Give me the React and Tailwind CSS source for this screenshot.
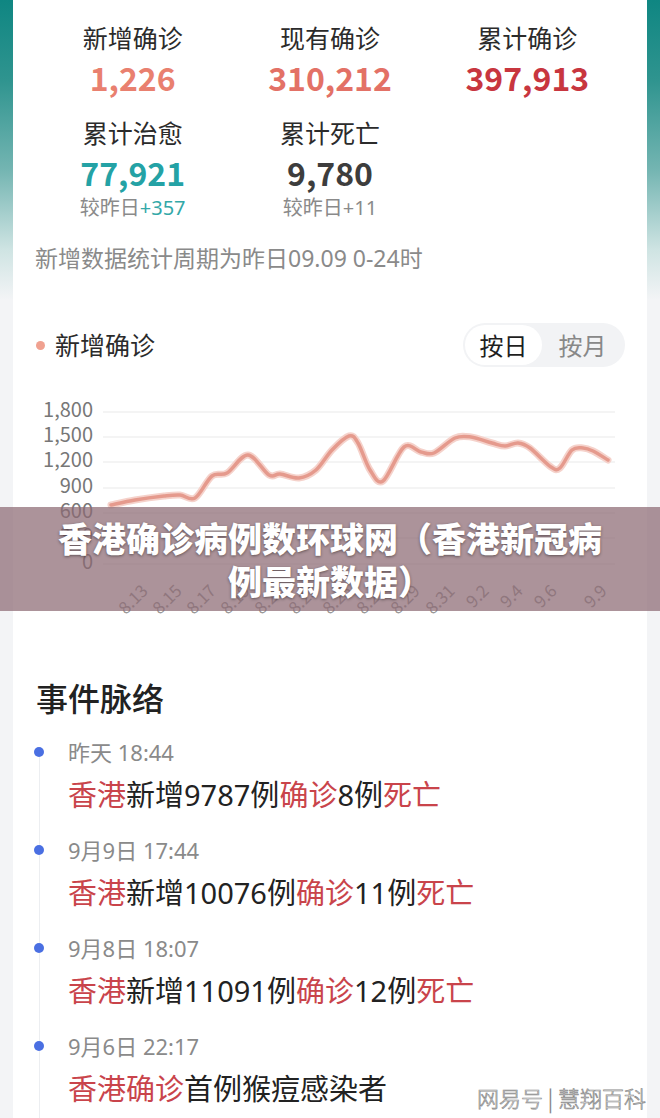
const points = [
  [111, 505], [135, 500], [164, 496], [180, 495], [195, 498], [212, 476], [227, 473],
  [248, 455], [269, 475], [280, 474], [299, 478], [316, 470], [332, 450], [349, 436],
  [358, 443], [370, 470], [383, 481], [404, 447], [421, 452], [434, 453], [455, 438],
  [471, 437], [492, 443], [505, 446], [518, 443], [530, 448], [551, 467], [560, 468],
  [572, 450], [583, 448], [593, 451], [608, 460],
];

// catmull-rom -> bezier
function smoothPath(pts) {
  let d = `M${pts[0][0]},${pts[0][1]}`;
  for (let i = 0; i < pts.length - 1; i++) {
    const p0 = pts[i - 1] || pts[i];
    const p1 = pts[i];
    const p2 = pts[i + 1];
    const p3 = pts[i + 2] || p2;
    const c1x = p1[0] + (p2[0] - p0[0]) / 6;
    const c1y = p1[1] + (p2[1] - p0[1]) / 6;
    const c2x = p2[0] - (p3[0] - p1[0]) / 6;
    const c2y = p2[1] - (p3[1] - p1[1]) / 6;
    d += ` C${c1x},${c1y} ${c2x},${c2y} ${p2[0]},${p2[1]}`;
  }
  return d;
}

const yTicks = [
  ['1,800', 412], ['1,500', 437], ['1,200', 462], ['900', 488],
  ['600', 513], ['300', 538], ['0', 564],
];

const xTicks = [
  ['8.13', 149], ['8.15', 183], ['8.17', 217], ['8.19', 251], ['8.21', 285],
  ['8.23', 319], ['8.25', 353], ['8.27', 387], ['8.29', 421], ['8.31', 456],
  ['9.2', 490], ['9.4', 524], ['9.6', 558], ['9.9', 608],
];

const events = [
  {
    time: '昨天 18:44',
    parts: [['香港', true], ['新增9787例', false], ['确诊', true], ['8例', false], ['死亡', true]],
  },
  {
    time: '9月9日 17:44',
    parts: [['香港', true], ['新增10076例', false], ['确诊', true], ['11例', false], ['死亡', true]],
  },
  {
    time: '9月8日 18:07',
    parts: [['香港', true], ['新增11091例', false], ['确诊', true], ['12例', false], ['死亡', true]],
  },
  {
    time: '9月6日 22:17',
    parts: [['香港', true], ['确诊', true], ['首例猴痘感染者', false]],
  },
];

function Stat({ label, value, color, delta, deltaColor }) {
  return (
    <div className="flex flex-col items-center">
      <div className="text-[25px] leading-[35px] text-[#2b2b2b]">{label}</div>
      <div className={`text-[32px] leading-[40px] font-bold mt-[2px] ${color}`}>{value}</div>
      {delta && (
        <div className="text-[20px] leading-[28px] text-[#8a8a8a] mt-[2px] font-['Noto_Sans','Noto_Sans_CJK_SC',sans-serif]">
          较昨日<span className={deltaColor}>{delta}</span>
        </div>
      )}
    </div>
  );
}

function Chart() {
  return (
    <svg width="634" height="263" viewBox="13 367 634 263" className="block">
      {yTicks.map(([label, y]) => (
        <g key={label}>
          <line x1="103" x2="615" y1={y} y2={y} stroke="#f1f1f1" strokeWidth="1.5" />
          <text x="93" y={y} textAnchor="end" dominantBaseline="middle" fontSize="20" fill="#777">
            {label}
          </text>
        </g>
      ))}
      <path d={smoothPath(points)} fill="none" stroke="#f5d2cb" strokeWidth="7" strokeLinecap="round" strokeLinejoin="round" />
      <path d={smoothPath(points)} fill="none" stroke="#e59a8d" strokeWidth="3.5" strokeLinecap="round" strokeLinejoin="round" />
      {xTicks.map(([label, x]) => (
        <text key={label} x={x} y="592" textAnchor="end" fontSize="17" fill="#999" transform={`rotate(-45 ${x} 592)`}>
          {label}
        </text>
      ))}
    </svg>
  );
}

export default function App() {
  return (
    <div className="relative w-full min-h-[1118px] overflow-hidden bg-[#f3f4f6] bg-[linear-gradient(180deg,#0f8682_0px,#2f948f_80px,#74b5b2_170px,#cfe4e3_250px,#f3f4f6_300px)] font-['Noto_Sans_CJK_SC','Noto_Sans',sans-serif]">
      <div className="mx-[13px] bg-white pb-[40px]">
        {/* stats */}
        <div className="grid grid-cols-3 px-[21px] pt-[20px]">
          <Stat label="新增确诊" value="1,226" color="text-[#e9806f]" />
          <Stat label="现有确诊" value="310,212" color="text-[#e37166]" />
          <Stat label="累计确诊" value="397,913" color="text-[#c8363f]" />
        </div>
        <div className="grid grid-cols-3 px-[21px] mt-[18px]">
          <Stat label="累计治愈" value="77,921" color="text-[#24a2a5]" delta="+357" deltaColor="text-[#33a8a8]" />
          <Stat label="累计死亡" value="9,780" color="text-[#3d3d3d]" delta="+11" deltaColor="text-[#8a8a8a]" />
        </div>
        <div className="pl-[22px] mt-[21px] text-[23px] leading-[30px] text-[#8a8a8a] font-['Noto_Sans','Noto_Sans_CJK_SC',sans-serif]">
          新增数据统计周期为昨日09.09 0-24时
        </div>

        {/* chart header */}
        <div className="flex items-center justify-between pl-[23px] pr-[22px] mt-[50px] h-[44px]">
          <div className="flex items-center gap-[10px]">
            <span className="w-[9px] h-[9px] rounded-full bg-[#f0a190]" />
            <span className="text-[25px] text-[#2b2b2b]">新增确诊</span>
          </div>
          <div className="flex items-center h-[44px] w-[162px] p-[2px] rounded-full bg-[#f2f3f5]">
            <div className="flex items-center justify-center w-[77px] h-[40px] rounded-full bg-white text-[24px] text-[#1f1f1f]">
              按日
            </div>
            <div className="flex-1 flex items-center justify-center text-[24px] text-[#888]">按月</div>
          </div>
        </div>

        <Chart />

        {/* timeline */}
        <div className="pl-[23px] mt-[46px] text-[32px] leading-[42px] font-medium text-[#222]">事件脉络</div>
        <div className="mt-[20px] font-['Noto_Sans','Noto_Sans_CJK_SC',sans-serif]">
          {events.map((ev, i) => (
            <div key={i} className="flex pl-[21px]">
              <div className="flex flex-col items-center w-[10px]">
                <div className={`w-px h-[9px] ${i === 0 ? 'bg-transparent' : 'bg-[#eceef1]'}`} />
                <div className="w-[10px] h-[10px] rounded-full bg-[#4a6fe2]" />
                <div className="w-px flex-1 bg-[#eceef1]" />
              </div>
              <div className="ml-[24px] pb-[22px]">
                <div className="text-[22px] leading-[28px] text-[#8a8a8a]">{ev.time}</div>
                <div className="mt-[10px] text-[29px] leading-[38px] text-[#222]">
                  {ev.parts.map(([t, red], j) => (
                    <span key={j} className={red ? 'text-[#c9444b]' : ''}>{t}</span>
                  ))}
                </div>
              </div>
            </div>
          ))}
        </div>
      </div>

      {/* title overlay */}
      <div className="absolute left-0 top-[507px] w-full h-[104px] bg-[rgba(140,105,115,0.72)] flex flex-col items-center justify-center">
        <div className="text-[34px] leading-[43px] font-black text-white [text-shadow:0_1px_3px_rgba(0,0,0,0.45)]">
          香港确诊病例数环球网（香港新冠病
        </div>
        <div className="text-[34px] leading-[43px] font-black text-white [text-shadow:0_1px_3px_rgba(0,0,0,0.45)]">
          例最新数据）
        </div>
      </div>

      {/* watermark */}
      <div className="absolute right-[14px] top-[1083px] text-[22px] leading-[28px] font-light text-white [-webkit-text-stroke:0.7px_#8a8a8a]">
        网易号 <span className="font-thin">|</span> 慧翔百科
      </div>
    </div>
  );
}
